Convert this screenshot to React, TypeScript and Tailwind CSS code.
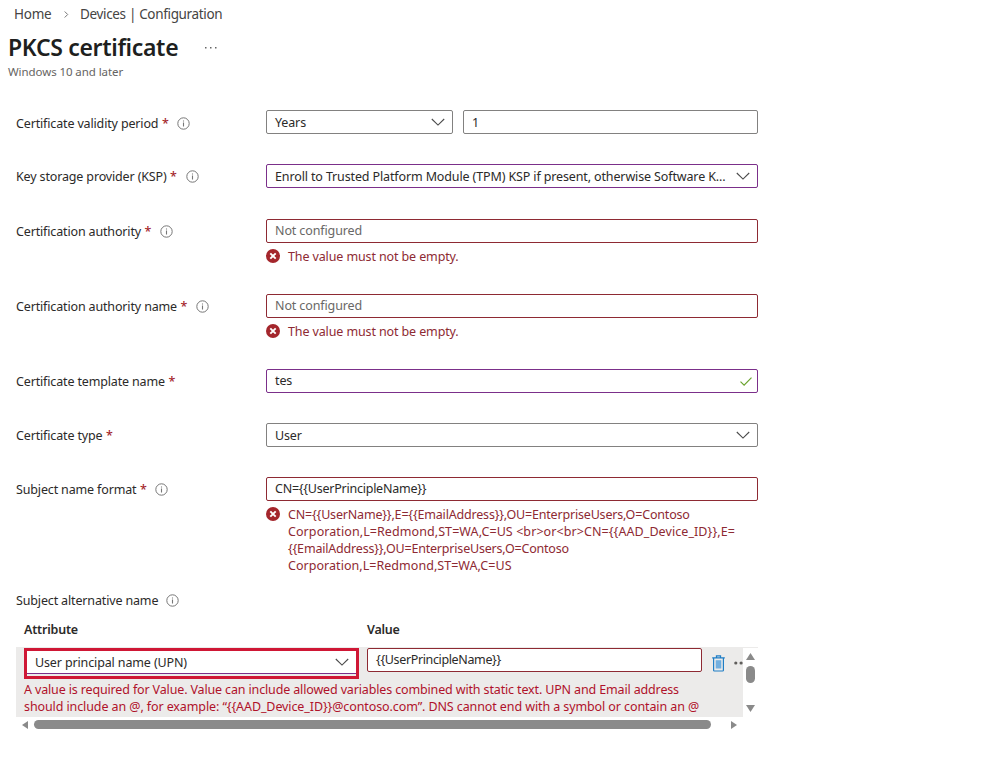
import type { ReactNode } from 'react'
import clsx from 'clsx'

type Tone = 'default' | 'edited' | 'error'

const borders: Record<Tone, string> = {
  default: 'border-[#828180]',
  edited: 'border-[#7b2f8a]',
  error: 'border-[#8e2a33]',
}

function InfoIcon() {
  return (
    <svg className="mb-px ml-2 size-[13px] shrink-0" viewBox="0 0 13 13" fill="none" stroke="#767676">
      <circle cx="6.5" cy="6.5" r="5.7" strokeWidth="1" />
      <path d="M6.5 5.6v3.9M6.5 3.4v1.2" strokeWidth="1.1" />
    </svg>
  )
}

function Chevron() {
  return (
    <svg className="h-2 w-[14px] shrink-0" viewBox="0 0 14 8" fill="none" stroke="#4a4a4a" strokeWidth="1.1">
      <path d="M.8 1 7 7.1 13.2 1" />
    </svg>
  )
}

function Check() {
  return (
    <svg className="mr-[5px] h-[9px] w-3" viewBox="0 0 12 9" fill="none" stroke="#6aa32e" strokeWidth="1.2">
      <path d="m.5 4.6 3.6 3.5L11.5.6" />
    </svg>
  )
}

function ErrorIcon() {
  return (
    <svg className="mt-px size-[14px] shrink-0" viewBox="0 0 14 14">
      <circle cx="7" cy="7" r="7" fill="#a4262c" />
      <path d="m4.3 4.3 5.4 5.4m0-5.4L4.3 9.7" stroke="#fff" strokeWidth="1.9" />
    </svg>
  )
}

function TrashIcon() {
  return (
    <svg className="h-[17px] w-[13px] shrink-0" viewBox="0 0 13 17" fill="none" stroke="#1f7ec6">
      <path d="M.2 2.9h12.6M4.5 2.7V.9h4v1.8" strokeWidth="1.3" />
      <path d="M1.6 3v12.2q0 .8.8.8h8.2q.8 0 .8-.8V3" strokeWidth="1.2" />
      <path d="M3.7 5.2h5.6v8.3H3.7z" fill="#72afdf" stroke="none" />
    </svg>
  )
}

function Label({ text, required, info }: { text: ReactNode; required?: boolean; info?: boolean }) {
  return (
    <div className="flex h-[26px] w-[250px] shrink-0 items-center tracking-[-0.15px] whitespace-nowrap">
      <span>{text}</span>
      {required && <span className="ml-[3.5px] w-[7.5px] font-medium text-[#a4262c]">*</span>}
      {info && <InfoIcon />}
    </div>
  )
}

function Field({ children, tone = 'default', className, icon }: {
  children: ReactNode
  tone?: Tone
  className?: string
  icon?: ReactNode
}) {
  return (
    <div className={clsx('flex items-center justify-between bg-white pl-2 whitespace-nowrap', borders[tone], className ?? 'h-6 rounded-[2px] border')}>
      <span>{children}</span>
      {icon}
    </div>
  )
}

function Select({ children, tone, className = 'h-6 rounded-[2px] border pr-[7px]' }: {
  children: ReactNode
  tone?: Tone
  className?: string
}) {
  return (
    <Field tone={tone} className={className} icon={<Chevron />}>
      <span className="block pt-[2px] tracking-[-0.13px]">{children}</span>
    </Field>
  )
}

function ErrorMessage({ children }: { children: ReactNode }) {
  return (
    <div className="mt-[5px] flex gap-2 leading-[17px] whitespace-nowrap text-[#8e2a33]">
      <ErrorIcon />
      <div>{children}</div>
    </div>
  )
}

function Row({ label, required, info, className, children }: {
  label: ReactNode
  required?: boolean
  info?: boolean
  className: string
  children: ReactNode
}) {
  return (
    <div className={clsx('flex items-start', className)}>
      <Label text={label} required={required} info={info} />
      <div className="w-[492px]">{children}</div>
    </div>
  )
}

export default function App() {
  return (
    <div className="h-[762px] w-[1000px] overflow-hidden bg-white font-['Noto_Sans','Open_Sans',sans-serif] text-[12.5px] tracking-[-0.12px] text-[#2b2a29]">
      <header>
        <nav className="flex h-7 items-center pl-[14px] text-[13.5px] tracking-[-0.34px] text-[#454443]">
          <span className="w-[38px] tracking-[-0.25px]">Home</span>
          <svg className="mr-[11px] ml-3 h-[7px] w-[5px]" viewBox="0 0 5 7" fill="none" stroke="#777">
            <path d="m.7.5 3 3-3 3" />
          </svg>
          <span>Devices | Configuration</span>
        </nav>
        <div className="flex h-10 items-center pl-2">
          <h1 className="w-[197px] pb-[2px] text-[23px] font-semibold tracking-[-0.33px] whitespace-nowrap text-[#201f1e]">PKCS certificate</h1>
          <svg className="h-[2px] w-3" viewBox="0 0 12 2" fill="#666">
            <path d="M0 0h1.5v1.5H0zM5 0h1.5v1.5H5zM10 0h1.5v1.5H10z" />
          </svg>
        </div>
        <p className="pl-2 text-[11.5px] leading-[8px] tracking-[-0.08px] text-[#666462]">Windows 10 and later</p>
      </header>

      <main className="pt-[34px] pl-4">
        <div className="flex h-[54px] items-start">
          <div className="pt-px">
            <Label text="Certificate validity period" required info />
          </div>
          <div className="flex gap-[10px]">
            <Select className="h-6 w-[187px] rounded-[2px] border pr-[7px]">Years</Select>
            <Field className="h-6 w-[295px] rounded-[2px] border"><span className="block pt-[2px]">1</span></Field>
          </div>
        </div>
        <Row label="Key storage provider (KSP)" required info className="h-[55px]">
          <Select tone="edited">
            Enroll to Trusted Platform Module (TPM) KSP if present, otherwise Software K...
          </Select>
        </Row>
        <Row label="Certification authority" required info className="h-[75px]">
          <Field tone="error"><span className="text-[#696866]">Not configured</span></Field>
          <ErrorMessage>The value must not be empty.</ErrorMessage>
        </Row>
        <Row label="Certification authority name" required info className="h-[75px]">
          <Field tone="error"><span className="text-[#696866]">Not configured</span></Field>
          <ErrorMessage>The value must not be empty.</ErrorMessage>
        </Row>
        <Row label="Certificate template name" required className="h-[54px]">
          <Field tone="edited" icon={<Check />}>tes</Field>
        </Row>
        <Row label="Certificate type" required className="h-[54px]">
          <Select>User</Select>
        </Row>
        <Row label="Subject name format" required info className="h-[111px]">
          <Field tone="error"><span className="tracking-[-0.24px]">{'CN={{UserPrincipleName}}'}</span></Field>
          <ErrorMessage>
            <p className="tracking-[-0.18px]">{'CN={{UserName}},E={{EmailAddress}},OU=EnterpriseUsers,O=Contoso'}</p>
            <p className="tracking-[0.08px]">{'Corporation,L=Redmond,ST=WA,C=US <br>or<br>CN={{AAD_Device_ID}},E='}</p>
            <p className="tracking-[-0.19px]">{'{{EmailAddress}},OU=EnterpriseUsers,O=Contoso'}</p>
            <p className="tracking-[0.04px]">Corporation,L=Redmond,ST=WA,C=US</p>
          </ErrorMessage>
        </Row>

        <Label text="Subject alternative name" info />

        <section className="w-[742px]">
          <div className="flex h-[33px] items-center pl-2 font-semibold">
            <div className="w-[343px] tracking-[-0.2px]">Attribute</div>
            <div className="tracking-[-0.25px]">Value</div>
          </div>
          <div className="flex h-[70px] border-t border-[#ecebea]">
            <div className="w-[727px] overflow-hidden bg-[#ecebea] pl-2">
              <div className="flex w-[740px] items-start">
                <div className="h-[31px] w-[335px] border-[3px] border-[#cf1735]">
                  <Select tone="edited" className="h-[23px] border-b pr-[7px]">User principal name (UPN)</Select>
                </div>
                <Field tone="error" className="ml-2 h-6 w-[335px] rounded-[2px] border">
                  <span className="tracking-[-0.36px]">{'{{UserPrincipleName}}'}</span>
                </Field>
                <div className="flex h-7 items-center pt-[2px] pl-[9.5px]">
                  <TrashIcon />
                  <svg className="ml-[9px] h-1 w-[14px]" viewBox="0 0 14 4" fill="#605e5c">
                    <circle cx="1.8" cy="2" r="1.6" />
                    <circle cx="7.1" cy="2" r="1.6" />
                    <circle cx="12.4" cy="2" r="1.6" />
                  </svg>
                </div>
              </div>
              <div className="mt-[2px] leading-[17px] whitespace-nowrap text-[#b0122a]">
                <p className="tracking-[-0.145px]">A value is required for Value. Value can include allowed variables combined with static text. UPN and Email address</p>
                <p className="tracking-[-0.1px]">{'should include an @, for example: “{{AAD_Device_ID}}@contoso.com”. DNS cannot end with a symbol or contain an @'}</p>
              </div>
            </div>
            <div className="flex w-[15px] flex-col items-center pt-[5px]">
              <svg className="h-[7px] w-[9px]" viewBox="0 0 9 7" fill="#8a8a8a"><path d="M4.5 0 9 7H0z" /></svg>
              <div className="mt-[6px] h-[17px] w-[9px] rounded-full bg-[#8a8a8a]" />
              <svg className="mt-[22px] h-[7px] w-[9px]" viewBox="0 0 9 7" fill="#8a8a8a"><path d="M0 0h9L4.5 7z" /></svg>
            </div>
          </div>
          <div className="flex h-[15px] items-center pl-[6px]">
            <svg className="h-[8px] w-[6px]" viewBox="0 0 6 8" fill="#8a8a8a"><path d="M6 0v8L0 4z" /></svg>
            <div className="ml-[6px] h-[9px] w-[677px] rounded-full bg-[#8a8a8a]" />
            <svg className="ml-5 h-[8px] w-[6px]" viewBox="0 0 6 8" fill="#8a8a8a"><path d="M0 0v8l6-4z" /></svg>
          </div>
        </section>
      </main>
    </div>
  )
}
